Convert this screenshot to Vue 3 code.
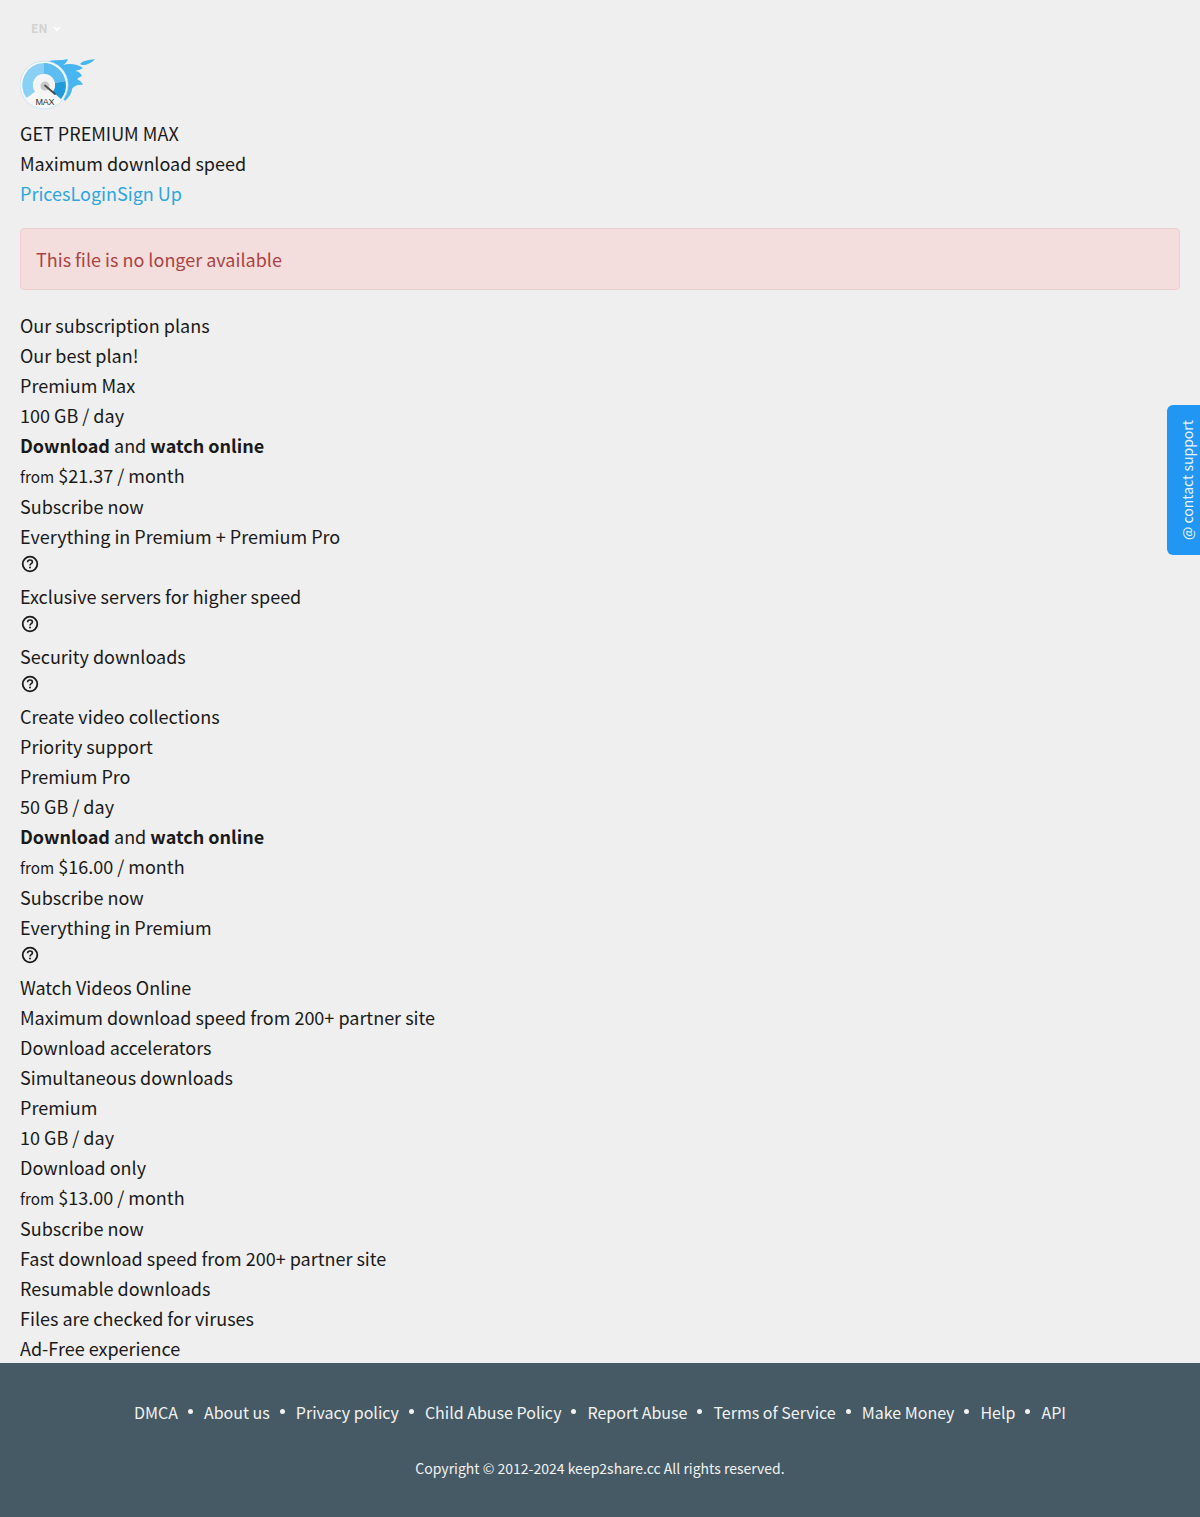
<template>
  <div class="page">
    <header class="top">
      <div class="lang">
        <span>EN</span>
        <svg width="8" height="6" viewBox="0 0 8 6"><path d="M0.5 0.8 L4 2.4 L7.5 0.8 L4 5.4 Z" fill="#fff" stroke="#fff" stroke-width="0.6" stroke-linejoin="round" /></svg>
      </div>
      <svg class="logo" width="78" height="54" viewBox="0 0 78 54">
        <path d="M27 4 C33 1 41 3 48 1 C47 4 45 6 43 7 C49 5 58 6 63 10 C60 12 57 12 55 13 C58 13 61 15 62 18 C60 19 58 20 57 21 C59 22 62 24 63 27 C58 26 54 28 52 31 C52 35 49 39 45 43 L36 30 Z" fill="#47b5ef" />
        <path d="M60 6 C62 3 68 2 75 1 C73 4 69 6 65 7 C63 7 61 7 60 6 Z" fill="#47b5ef" />
        <circle cx="24" cy="27" r="24" fill="#f7f7f7" stroke="#bfe2f5" stroke-width="0.8" />
        <path d="M6.500 40 A22 22 0 0 1 24 5 L24 16 A11 11 0 0 0 15.200 33.600 Z" fill="#8ad0f4" />
        <path d="M24 5 A22 22 0 0 1 45.500 23 L34.800 25 A11 11 0 0 0 24 16 Z" fill="#5dbcf0" />
        <path d="M45.500 23 A22 22 0 0 1 41 41 L32.500 33.800 A11 11 0 0 0 34.800 25 Z" fill="#1f9bdc" />
        <circle cx="24" cy="27" r="11" fill="#f5f5f5" />
        <circle cx="25" cy="28" r="4.500" fill="#c8c8c8" />
        <path d="M25 27.500 L35 36" stroke="#4a4a4a" stroke-width="1.800" stroke-linecap="round" />
        <text x="15.500" y="47" class="logo-text">MAX</text>
      </svg>
      <p>GET PREMIUM MAX</p>
      <p>Maximum download speed</p>
      <nav class="auth">
        <a v-for="link in authLinks" :key="link">{{ link }}</a>
      </nav>
    </header>

    <div class="alert">This file is no longer available</div>

    <main class="plans">
      <p>Our subscription plans</p>
      <p>Our best plan!</p>
      <section v-for="plan in plans" :key="plan.name">
        <p>{{ plan.name }}</p>
        <p>{{ plan.quota }}</p>
        <p v-if="plan.online"><b>Download</b> and <b>watch online</b></p>
        <p v-else>Download only</p>
        <p class="price"><small>from</small> {{ plan.price }} / month</p>
        <p>Subscribe now</p>
        <div v-for="feature in plan.features" :key="feature.text">
          <p>{{ feature.text }}</p>
          <svg v-if="feature.hint" class="hint" width="20" height="20" viewBox="0 0 20 20">
            <circle cx="10" cy="10" r="7.300" fill="none" stroke="#1a1a1a" stroke-width="1.800" />
            <path d="M7.600 8.200 C7.600 6.800 8.700 6 10 6 C11.400 6 12.400 6.900 12.400 8 C12.400 9.600 10 9.600 10 11.400" fill="none" stroke="#1a1a1a" stroke-width="1.600" />
            <circle cx="10" cy="13.600" r="1" fill="#1a1a1a" />
          </svg>
        </div>
      </section>
    </main>

    <a class="support">@ contact support</a>

    <footer class="footer">
      <ul class="footer-links">
        <li v-for="link in footerLinks" :key="link">{{ link }}</li>
      </ul>
      <p class="copyright">Copyright © 2012-2024 keep2share.cc All rights reserved.</p>
    </footer>
  </div>
</template>

<script setup>
const authLinks = ['Prices', 'Login', 'Sign Up']

const plans = [
  {
    name: 'Premium Max',
    quota: '100 GB / day',
    online: true,
    price: '$21.37',
    features: [
      { text: 'Everything in Premium + Premium Pro', hint: true },
      { text: 'Exclusive servers for higher speed', hint: true },
      { text: 'Security downloads', hint: true },
      { text: 'Create video collections' },
      { text: 'Priority support' },
    ],
  },
  {
    name: 'Premium Pro',
    quota: '50 GB / day',
    online: true,
    price: '$16.00',
    features: [
      { text: 'Everything in Premium', hint: true },
      { text: 'Watch Videos Online' },
      { text: 'Maximum download speed from 200+ partner site' },
      { text: 'Download accelerators' },
      { text: 'Simultaneous downloads' },
    ],
  },
  {
    name: 'Premium',
    quota: '10 GB / day',
    online: false,
    price: '$13.00',
    features: [
      { text: 'Fast download speed from 200+ partner site' },
      { text: 'Resumable downloads' },
      { text: 'Files are checked for viruses' },
      { text: 'Ad-Free experience' },
    ],
  },
]

const footerLinks = [
  'DMCA',
  'About us',
  'Privacy policy',
  'Child Abuse Policy',
  'Report Abuse',
  'Terms of Service',
  'Make Money',
  'Help',
  'API',
]
</script>

<style>
body {
  background: #efefef;
}
</style>

<style scoped>
.page {
  position: relative;
  min-height: 1517px;
  font-family: "Noto Sans CJK JP", "Noto Sans", sans-serif;
  font-size: 18px;
  line-height: 30px;
  color: #1a1a1a;
  background: #efefef;
}

p {
  margin: 0;
}

.top {
  padding: 18px 20px 0;
}

.lang {
  display: flex;
  align-items: center;
  gap: 6px;
  height: 20px;
  padding-left: 11px;
  color: #d2d2d2;
  font-size: 12px;
  font-weight: 700;
}

.lang svg {
  margin-top: 1px;
}

.logo {
  display: block;
  margin-top: 20px;
  margin-bottom: 6px;
}

.logo-text {
  font-family: "Liberation Sans", sans-serif;
  font-size: 9px;
  letter-spacing: -0.2px;
  fill: #333;
}

.auth a {
  color: #2ea6dd;
}

.alert {
  margin: 20px 20px 20px;
  padding: 15px;
  border: 1px solid #ebcfd0;
  border-radius: 4px;
  color: #a94442;
  background: #f4dddd;
}

.plans {
  padding: 0 20px;
}

.price {
  height: 31px;
}

.price small {
  font-size: 15.3px;
}

.hint {
  display: block;
  margin: 3px 0 7px;
}

.support {
  position: absolute;
  top: 405px;
  right: 0;
  width: 33px;
  height: 150px;
  box-sizing: border-box;
  display: flex;
  align-items: center;
  justify-content: center;
  padding-right: 6px;
  border-radius: 0 6px 6px 0;
  color: #e8f4fd;
  background: #2196f3;
  font-size: 14px;
  writing-mode: vertical-rl;
  rotate: 180deg;
}

.footer {
  height: 154px;
  padding-top: 34px;
  box-sizing: border-box;
  color: #f2f2f2;
  background: #455a64;
  text-align: center;
}

.footer-links {
  display: flex;
  justify-content: center;
  margin: 0;
  padding: 0;
  font-size: 16px;
  list-style: none;
}

.footer-links li + li::before {
  content: "";
  display: inline-block;
  width: 5px;
  height: 5px;
  margin: 0 11px 6px 10px;
  border-radius: 50%;
  background: #f2f2f2;
  vertical-align: middle;
}

.copyright {
  margin-top: 26px;
  font-size: 14px;
}
</style>
